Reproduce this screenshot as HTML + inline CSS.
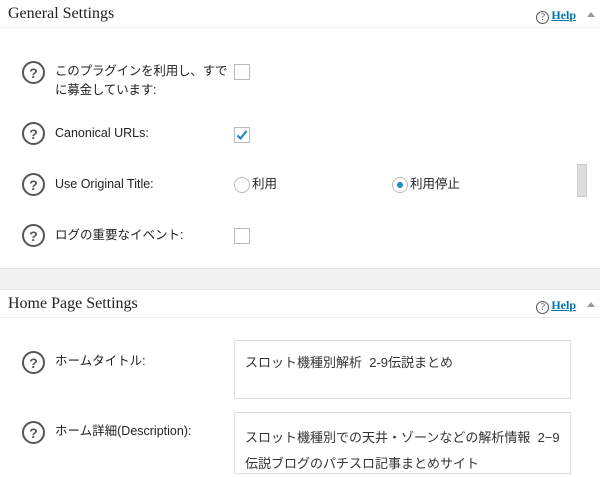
<!DOCTYPE html>
<html><head><meta charset="utf-8"><style>
*{margin:0;padding:0;box-sizing:border-box}
body{width:600px;height:472px;overflow:hidden;background:#fff;font-family:"Liberation Sans","Noto Sans CJK JP",sans-serif;color:#333;position:relative}
.a{position:absolute}
.hd{left:0;width:600px;height:28px;border-bottom:1px solid #eee;font-family:"Liberation Serif",serif;font-size:16px;color:#222}
.hd span.t{position:absolute;left:8px;top:5px}
.help{position:absolute;right:24px;top:8px;font-size:12px;font-weight:bold;color:#0073aa;text-decoration:underline;font-family:"Liberation Serif",serif}
.help i{display:inline-block;width:13px;height:13px;border:1px solid #555;border-radius:50%;font-style:normal;font-weight:normal;font-size:10px;color:#555;text-align:center;line-height:11px;text-decoration:none;margin-right:2px;vertical-align:-1px}
.tri{position:absolute;right:5px;top:12px;width:0;height:0;border-left:4px solid transparent;border-right:4px solid transparent;border-bottom:5px solid #999}
.q{width:23px;height:23px;border:2px solid #555;border-radius:50%;font-size:14px;font-weight:bold;color:#555;text-align:center;line-height:20px;left:22px}
.lb{left:55px;font-size:12.5px;color:#222;line-height:19px;white-space:nowrap}
.cb{width:16px;height:16px;border:1px solid #bbb;left:234px;background:#fff}
.rd{width:16px;height:16px;border:1px solid #bbb;border-radius:50%}
.ta{left:234px;width:337px;border:1px solid #ddd;font-size:13px;padding:8px 10px;line-height:26px;color:#333}
</style></head><body>
<div class="a hd" style="top:0"><span class="t">General Settings</span><span class="help"><i>?</i>Help</span><span class="tri"></span></div>

<div class="a q" style="top:61px">?</div>
<div class="a lb" style="top:62px;letter-spacing:-0.2px">このプラグインを利用し、すで<br>に募金しています:</div>
<div class="a cb" style="top:64px"></div>

<div class="a q" style="top:122px">?</div>
<div class="a lb" style="top:124px">Canonical URLs:</div>
<div class="a cb" style="top:127px"><svg width="14" height="14" viewBox="0 0 14 14" style="position:absolute;left:0;top:0"><path d="M2.5 7.5 L5.5 10.5 L11.5 3" stroke="#1e8cbe" stroke-width="2.2" fill="none"/></svg></div>

<div class="a q" style="top:173px">?</div>
<div class="a lb" style="top:175px">Use Original Title:</div>
<div class="a rd" style="left:234px;top:177px"></div>
<div class="a lb" style="left:252px;top:175px">利用</div>
<div class="a rd" style="left:392px;top:177px"><div style="position:absolute;left:4px;top:4px;width:6px;height:6px;border-radius:50%;background:#1e8cbe"></div></div>
<div class="a lb" style="left:410px;top:175px">利用停止</div>
<div class="a" style="left:577px;top:164px;width:10px;height:33px;border:1px solid #ccc;background:#ddd"></div>

<div class="a q" style="top:224px">?</div>
<div class="a lb" style="top:226px">ログの重要なイベント:</div>
<div class="a cb" style="top:228px"></div>

<div class="a" style="left:0;top:268px;width:600px;height:22px;background:#f1f1f1;border-top:1px solid #e5e5e5;border-bottom:1px solid #e5e5e5"></div>

<div class="a hd" style="top:290px"><span class="t">Home Page Settings</span><span class="help"><i>?</i>Help</span><span class="tri"></span></div>

<div class="a q" style="top:351px">?</div>
<div class="a lb" style="top:352px">ホームタイトル:</div>
<div class="a ta" style="top:340px;height:59px;padding-top:9px">スロット機種別解析&nbsp; 2-9伝説まとめ</div>

<div class="a q" style="top:421px">?</div>
<div class="a lb" style="top:422px">ホーム詳細(Description):</div>
<div class="a ta" style="top:412px;height:62px;padding-top:12px">スロット機種別での天井・ゾーンなどの解析情報&nbsp; 2−9伝説ブログのパチスロ記事まとめサイト</div>
</body></html>
